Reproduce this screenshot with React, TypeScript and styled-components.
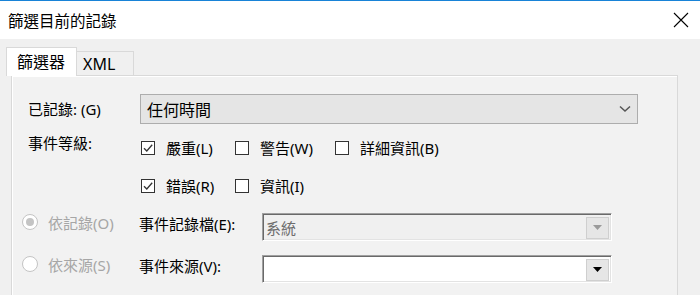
import React from "react";
import styled, { createGlobalStyle } from "styled-components";

const GlobalStyle = createGlobalStyle`
  html, body { margin: 0; padding: 0; background: #f0f0f0; }
  body {
    font-family: "Noto Sans", "Noto Sans CJK TC", sans-serif;
    color: #000;
    -webkit-font-smoothing: antialiased;
  }
`;

const Window = styled.div`
  width: 700px;
  height: 295px;
  overflow: hidden;
  border-top: 1px solid #1883d7;
  box-sizing: border-box;
  display: flex;
  flex-direction: column;
  background: #f0f0f0;
`;

const TitleBar = styled.div`
  height: 38px;
  flex: none;
  background: #fff;
  display: flex;
  align-items: center;
  justify-content: space-between;
  padding: 0 11px 0 8px;
`;

const Title = styled.div`
  font-size: 15.5px;
  line-height: 20px;
  margin-top: 1px;
`;

const CloseIcon = styled.svg`
  width: 16px;
  height: 16px;
  display: block;
`;

const Body = styled.div`
  flex: 1;
  padding-top: 8px;
`;

const TabStrip = styled.div`
  display: flex;
  align-items: flex-end;
  padding-left: 6px;
  height: 28px;
  position: relative;
  z-index: 1;
`;

const Tab = styled.div<{ $active?: boolean }>`
  box-sizing: border-box;
  border: 1px solid #d9d9d9;
  border-bottom: none;
  font-size: 16px;
  line-height: 20px;
  display: flex;
  align-items: center;
  white-space: nowrap;
  ${(p) =>
    p.$active
      ? `
    background: #fff;
    height: 29px;
    margin-bottom: -1px;
    padding: 0 10px 0 10px;
    width: 71px;
  `
      : `
    background: #f0f0f0;
    height: 24px;
    padding: 0 6px 0 6px;
    width: 57px;
    border-left: none;
  `}
`;

const Panel = styled.div`
  margin-left: 11px;
  width: 667px;
  height: 240px;
  box-sizing: border-box;
  border: 1px solid #d9d9d9;
  box-shadow: inset 1px 1px 0 #fff;
  background: #f2f2f2;
  padding: 18px 0 0 16px;
  font-size: 15px;
`;

const Row = styled.div<{ $mt?: number; $ml?: number }>`
  display: flex;
  align-items: flex-start;
  margin-top: ${(p) => p.$mt ?? 0}px;
  margin-left: ${(p) => p.$ml ?? 0}px;
`;

const FieldLabel = styled.div<{ $w: number; $mt?: number }>`
  width: ${(p) => p.$w}px;
  flex: none;
  line-height: 20px;
  white-space: nowrap;
  margin-top: ${(p) => p.$mt ?? 0}px;
`;

const Combo = styled.div`
  width: 498px;
  height: 30px;
  box-sizing: border-box;
  border: 1px solid #adadad;
  background: #e5e5e5;
  display: flex;
  align-items: center;
  justify-content: space-between;
  padding: 0 6px 0 6px;
  font-size: 16px;
`;

const Chevron = styled.svg`
  width: 12px;
  height: 8px;
  display: block;
`;

const CheckGrid = styled.div`
  display: grid;
  grid-template-columns: 94px 100px auto;
  grid-auto-rows: 24px;
  row-gap: 14px;
`;

const CheckItem = styled.label`
  display: flex;
  align-items: center;
  line-height: 20px;
  white-space: nowrap;
`;

const Box = styled.span`
  width: 14px;
  height: 14px;
  box-sizing: border-box;
  border: 1px solid #333;
  background: #fff;
  margin-right: 11px;
  display: inline-flex;
  align-items: center;
  justify-content: center;
  flex: none;
`;

const RadioItem = styled.div`
  width: 117px;
  flex: none;
  display: flex;
  align-items: center;
  height: 18px;
`;

const RadioCircle = styled.span<{ $checked?: boolean }>`
  width: 16px;
  height: 16px;
  box-sizing: border-box;
  border-radius: 50%;
  border: 1px solid #c4c4c4;
  background: #fff;
  display: inline-flex;
  align-items: center;
  justify-content: center;
  margin-right: 10px;
  flex: none;
  &::after {
    content: "";
    width: 8px;
    height: 8px;
    border-radius: 50%;
    background: ${(p) => (p.$checked ? "#c4c4c4" : "transparent")};
  }
`;

const RadioText = styled.span`
  color: #a6a6a6;
  line-height: 20px;
  margin-top: 2px;
  white-space: nowrap;
`;

const SunkenInput = styled.div<{ $disabled?: boolean }>`
  width: 350px;
  height: 28px;
  box-sizing: border-box;
  border: 1px solid;
  border-color: #a0a0a0 #fff #fff #a0a0a0;
  box-shadow: inset 1px 1px 0 #696969, inset -1px -1px 0 #e3e3e3;
  background: ${(p) => (p.$disabled ? "#f0f0f0" : "#fff")};
  display: flex;
  align-items: center;
  padding: 2px 2px 1px 3px;
`;

const InputText = styled.span`
  flex: 1;
  color: #6d6d6d;
  font-size: 15px;
  line-height: 20px;
`;

const DropButton = styled.span`
  width: 23px;
  height: 22px;
  box-sizing: border-box;
  border: 1px solid #cfcfcf;
  background: #e6e6e6;
  display: inline-flex;
  align-items: center;
  justify-content: center;
  flex: none;
`;

const Tri = styled.svg`
  width: 9px;
  height: 5px;
  display: block;
`;

const Check = () => (
  <svg width="12" height="12" viewBox="0 0 12 12">
    <path d="M2 6.2 L4.8 9 L10.2 2.8" fill="none" stroke="#333" strokeWidth="1.3" />
  </svg>
);

const CheckBox: React.FC<{ checked?: boolean; label: string }> = ({ checked, label }) => (
  <CheckItem>
    <Box>{checked ? <Check /> : null}</Box>
    {label}
  </CheckItem>
);

const Dropdown: React.FC<{ disabled?: boolean; text?: string }> = ({ disabled, text }) => (
  <SunkenInput $disabled={disabled}>
    <InputText>{text}</InputText>
    <DropButton>
      <Tri viewBox="0 0 9 5">
        <path d="M0 0 H9 L4.5 5 Z" fill={disabled ? "#9a9a9a" : "#000"} />
      </Tri>
    </DropButton>
  </SunkenInput>
);

export default function App() {
  return (
    <>
      <GlobalStyle />
      <Window>
        <TitleBar>
          <Title>篩選目前的記錄</Title>
          <CloseIcon viewBox="0 0 16 16">
            <path d="M1 1 L15 15 M15 1 L1 15" stroke="#000" strokeWidth="1.1" fill="none" />
          </CloseIcon>
        </TitleBar>
        <Body>
          <TabStrip>
            <Tab $active>篩選器</Tab>
            <Tab>XML</Tab>
          </TabStrip>
          <Panel>
            <Row>
              <FieldLabel $w={112} $mt={5}>已記錄: (G)</FieldLabel>
              <Combo>
                <span>任何時間</span>
                <Chevron viewBox="0 0 12 8">
                  <path d="M1 1.5 L6 6 L11 1.5" fill="none" stroke="#555" strokeWidth="1.5" />
                </Chevron>
              </Combo>
            </Row>
            <Row $mt={12}>
              <FieldLabel $w={113} $mt={-3}>事件等級:</FieldLabel>
              <CheckGrid>
                <CheckBox checked label="嚴重(L)" />
                <CheckBox label="警告(W)" />
                <CheckBox label="詳細資訊(B)" />
                <CheckBox checked label="錯誤(R)" />
                <CheckBox label="資訊(I)" />
              </CheckGrid>
            </Row>
            <Row $mt={15} $ml={-6}>
              <RadioItem>
                <RadioCircle $checked />
                <RadioText>依記錄(O)</RadioText>
              </RadioItem>
              <FieldLabel $w={123} $mt={1}>事件記錄檔(E):</FieldLabel>
              <Dropdown disabled text="系統" />
            </Row>
            <Row $mt={14} $ml={-6}>
              <RadioItem>
                <RadioCircle />
                <RadioText>依來源(S)</RadioText>
              </RadioItem>
              <FieldLabel $w={123} $mt={1}>事件來源(V):</FieldLabel>
              <Dropdown />
            </Row>
          </Panel>
        </Body>
      </Window>
    </>
  );
}
